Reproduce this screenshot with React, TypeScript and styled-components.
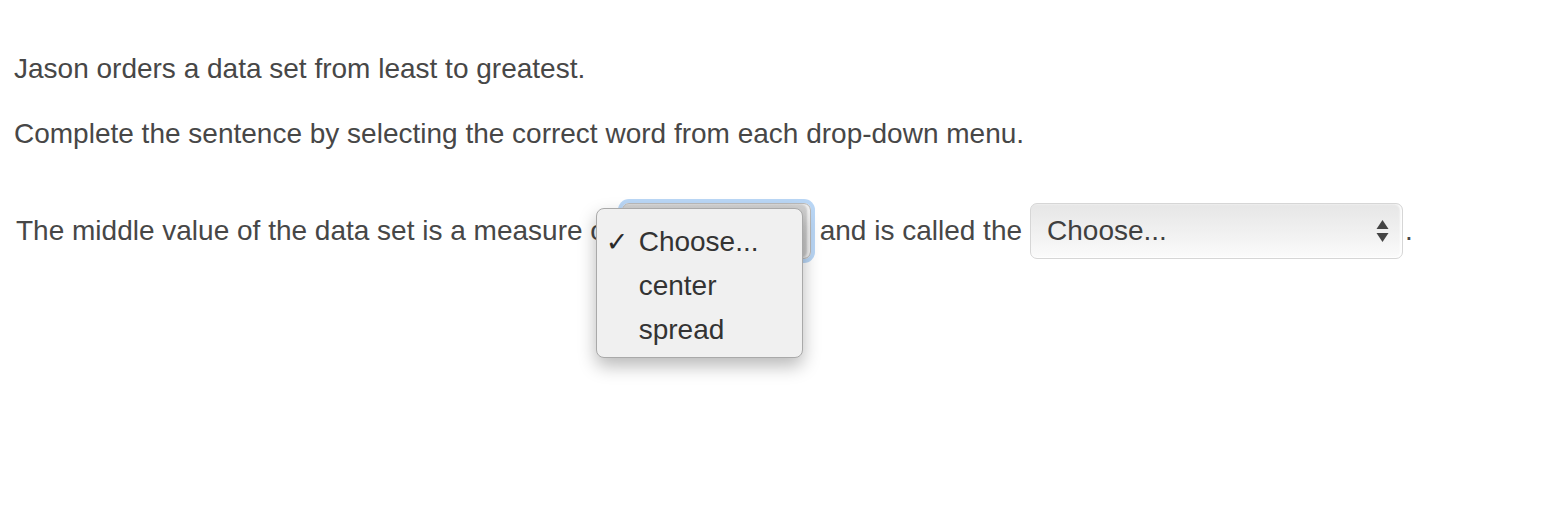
import React from "react";
import styled, { createGlobalStyle, css } from "styled-components";

const GlobalStyle = createGlobalStyle`
  body {
    margin: 0;
    background: #ffffff;
    font-family: "Liberation Sans", Arial, Helvetica, sans-serif;
    color: #474747;
  }
`;

const Page = styled.div`
  box-sizing: border-box;
  min-height: 508px;
  padding: 52px 14px 0 14px;
`;

const Paragraph = styled.p`
  margin: 0 0 31px 0;
  font-size: 28px;
  line-height: 34px;
`;

const SentenceRow = styled.div`
  display: flex;
  align-items: center;
  margin-top: 52px;
  padding-left: 2px;
  font-size: 28px;
  line-height: 34px;
  white-space: pre;
`;

const SelectWrap = styled.div<{ $after?: number }>`
  position: relative;
  margin: 0 ${(p) => p.$after ?? 9}px 0 8px;
`;

const SelectBox = styled.div<{ $width: number; $pressed?: boolean }>`
  box-sizing: border-box;
  width: ${(p) => p.$width}px;
  height: 56px;
  display: flex;
  align-items: center;
  justify-content: space-between;
  padding: 0 13px 0 16px;
  border: 1px solid #d6d6d6;
  border-radius: 7px;
  color: #3f3f3f;
  background: linear-gradient(#e6e6e6, #f2f2f2 60%, #fbfbfb);
  box-shadow: inset -2px 0 2px rgba(255, 255, 255, 0.9),
    inset 0 -1px 1px rgba(255, 255, 255, 0.8);
  ${(p) =>
    p.$pressed &&
    css`
      border-color: #b9b9b9;
      background: linear-gradient(#d0d0d0, #c6c6c6);
      box-shadow: 0 0 0 4px #b9d6f5, inset -3px 0 2px rgba(255, 255, 255, 0.7);
    `}
`;

const Arrows = styled.svg`
  width: 13px;
  height: 28px;
  flex: none;
`;

const Menu = styled.ul`
  position: absolute;
  left: -26px;
  top: 5px;
  width: 207px;
  box-sizing: border-box;
  margin: 0;
  padding: 11px 0 5px 0;
  list-style: none;
  background: #f0f0f0;
  border: 1px solid #a9a9a9;
  border-radius: 8px;
  box-shadow: 0 8px 18px rgba(0, 0, 0, 0.28);
  z-index: 2;
`;

const MenuItem = styled.li`
  display: flex;
  align-items: center;
  height: 44px;
  color: #333333;
  font-size: 28px;
`;

const Check = styled.span`
  width: 42px;
  box-sizing: border-box;
  padding-left: 9px;
  font-family: "DejaVu Sans", sans-serif;
  font-size: 27px;
  font-weight: bold;
  color: #2a2a2a;
`;

const UpDown = () => (
  <Arrows viewBox="0 0 13 28">
    <path d="M6.5 3 L12.5 12 L0.5 12 Z" fill="#444" />
    <path d="M0.5 16 L12.5 16 L6.5 25 Z" fill="#444" />
  </Arrows>
);

const options = ["Choose...", "center", "spread"];

export default function App() {
  return (
    <Page>
      <GlobalStyle />
      <Paragraph>Jason orders a data set from least to greatest.</Paragraph>
      <Paragraph>
        Complete the sentence by selecting the correct word from each drop-down menu.
      </Paragraph>
      <SentenceRow>
        The middle value of the data set is a measure of
        <SelectWrap>
          <SelectBox $width={189} $pressed>
            <span>Choose...</span>
            <UpDown />
          </SelectBox>
          <Menu>
            {options.map((o, i) => (
              <MenuItem key={o}>
                <Check>{i === 0 ? "✓" : ""}</Check>
                {o}
              </MenuItem>
            ))}
          </Menu>
        </SelectWrap>
        and is called the
        <SelectWrap $after={2}>
          <SelectBox $width={373}>
            <span>Choose...</span>
            <UpDown />
          </SelectBox>
        </SelectWrap>
        .
      </SentenceRow>
    </Page>
  );
}
